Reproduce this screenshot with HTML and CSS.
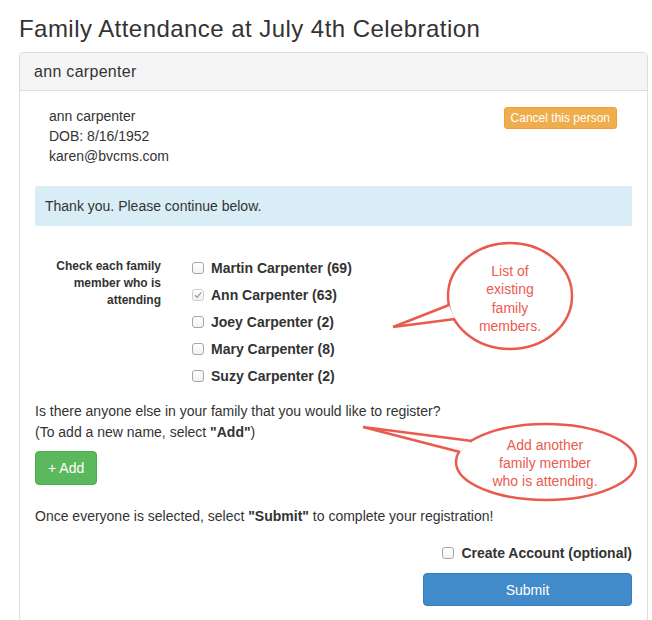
FILE: index.html
```html
<!DOCTYPE html>
<html lang="en">
<head>
    <meta charset="UTF-8">
    <meta name="viewport" content="width=device-width, initial-scale=1.0">
    <title>Family Attendance</title>
    <link rel="stylesheet" href="styles.css">
</head>
<body>
    <div class="page">
        <h1 class="title">Family Attendance at July 4th Celebration</h1>

        <div class="panel">
            <div class="panel-heading">ann carpenter</div>
            <div class="panel-body">
                <div class="person">
                    <div class="person-info">
                        <div>ann carpenter</div>
                        <div>DOB: 8/16/1952</div>
                        <div>karen@bvcms.com</div>
                    </div>
                    <button class="btn btn-warning btn-xs">Cancel this person</button>
                </div>

                <div class="alert">Thank you. Please continue below.</div>

                <div class="family">
                    <div class="family-label">Check each family member who is attending</div>
                    <div class="family-list">
                        <label class="check"><span class="box"></span>Martin Carpenter (69)</label>
                        <label class="check"><span class="box box-checked"><svg width="10" height="10" viewBox="0 0 10 10"><path d="M2 5.2 L4.2 7.4 L8.2 2.4" fill="none" stroke="#9a9a9a" stroke-width="1.3"/></svg></span>Ann Carpenter (63)</label>
                        <label class="check"><span class="box"></span>Joey Carpenter (2)</label>
                        <label class="check"><span class="box"></span>Mary Carpenter (8)</label>
                        <label class="check"><span class="box"></span>Suzy Carpenter (2)</label>
                    </div>
                </div>

                <p class="question">Is there anyone else in your family that you would like to register?<br>(To add a new name, select <b>"Add"</b>)</p>

                <button class="btn btn-success">+ Add</button>

                <p class="submit-note">Once everyone is selected, select <b>"Submit"</b> to complete your registration!</p>

                <div class="account">
                    <label class="check"><span class="box"></span>Create Account (optional)</label>
                </div>
                <div class="submit-row">
                    <button class="btn btn-primary btn-submit">Submit</button>
                </div>
            </div>
        </div>

        <svg class="callouts" width="652" height="620" viewBox="0 0 652 620">
            <ellipse cx="510" cy="296" rx="62" ry="53" fill="#fff" stroke="#ea5b4f" stroke-width="2.5"/>
            <path d="M449 305 L393 327 L455 319" fill="#fff" stroke="#ea5b4f" stroke-width="2.5" stroke-linejoin="miter"/>
            <text x="510" y="276" class="callout-text">List of</text>
            <text x="510" y="294" class="callout-text">existing</text>
            <text x="510" y="313" class="callout-text">family</text>
            <text x="510" y="331" class="callout-text">members.</text>

            <ellipse cx="546" cy="462" rx="90" ry="38" fill="#fff" stroke="#ea5b4f" stroke-width="2.5"/>
            <path d="M472 441 L363 427 L460 452" fill="#fff" stroke="#ea5b4f" stroke-width="2.5" stroke-linejoin="miter"/>
            <text x="545" y="450" class="callout-text">Add another</text>
            <text x="545" y="468" class="callout-text">family member</text>
            <text x="545" y="486" class="callout-text">who is attending.</text>
        </svg>
    </div>
</body>
</html>
```

FILE: styles.css
```css
:root {
    --text-color: #333333;
    --border-color: #dddddd;
    --heading-bg: #f5f5f5;
    --info-bg: #d9edf7;
    --warning: #f0ad4e;
    --success: #5cb85c;
    --primary: #428bca;
}

body {
    margin: 0;
    font-family: 'Liberation Sans', Arial, sans-serif;
    font-size: 14px;
    line-height: 20px;
    color: var(--text-color);
    background: #ffffff;
}

.page {
    position: relative;
    width: 652px;
    height: 620px;
    overflow: hidden;
}

.title {
    margin: 0;
    padding: 16px 0 0 19px;
    height: 36px;
    font-size: 24px;
    font-weight: 500;
    line-height: 26px;
    letter-spacing: 0.45px;
}

.panel {
    margin: 0 4px 0 19px;
    border: 1px solid var(--border-color);
    border-radius: 4px;
}

.panel-heading {
    padding: 10px 14px;
    background-color: var(--heading-bg);
    border-bottom: 1px solid var(--border-color);
    border-radius: 3px 3px 0 0;
    font-size: 16px;
    line-height: 17px;
    letter-spacing: 0.3px;
}

.panel-body {
    padding: 15px;
}

.person {
    display: flex;
    justify-content: space-between;
    align-items: flex-start;
    padding: 0 15px 0 14px;
}

.btn {
    display: inline-block;
    border: 1px solid transparent;
    border-radius: 4px;
    color: #ffffff;
    font-family: inherit;
    font-size: 14px;
    line-height: 20px;
    padding: 6px 12px;
    cursor: pointer;
}

.btn-xs {
    font-size: 12px;
    line-height: 18px;
    padding: 1px 6px;
    border-radius: 3px;
    margin-top: 1px;
}

.btn-warning {
    background-color: var(--warning);
    border-color: #eea236;
}

.btn-success {
    background-color: var(--success);
    border-color: #4cae4c;
    margin-top: 8px;
}

.btn-primary {
    background-color: var(--primary);
    border-color: #357ebd;
}

.alert {
    margin-top: 20px;
    padding: 10px;
    background-color: var(--info-bg);
    border-radius: 2px;
}

.family {
    display: grid;
    grid-template-columns: 141px 1fr;
    margin-top: 32px;
}

.family-label {
    padding-right: 15px;
    text-align: right;
    font-size: 12px;
    font-weight: bold;
    line-height: 17px;
}

.family-list {
    display: flex;
    flex-direction: column;
    gap: 7px;
    padding-left: 16px;
}

.check {
    display: flex;
    align-items: center;
    height: 20px;
    font-weight: bold;
}

.box {
    display: inline-flex;
    align-items: center;
    justify-content: center;
    box-sizing: border-box;
    width: 12px;
    height: 12px;
    margin-right: 7px;
    border: 1px solid #a6a6a6;
    border-radius: 3px;
    background: linear-gradient(#ffffff, #f2f2f2);
}

.box-checked {
    border-color: #cfcfcf;
}

.question {
    margin: 15px 0 0;
    line-height: 21px;
}

.submit-note {
    margin: 21px 0 0;
}

.account {
    display: flex;
    justify-content: flex-end;
    margin-top: 17px;
}

.submit-row {
    display: flex;
    justify-content: flex-end;
    margin-top: 10px;
}

.btn-submit {
    width: 209px;
    height: 33px;
    padding: 5px 12px;
}

.callouts {
    position: absolute;
    left: 0;
    top: 0;
    pointer-events: none;
}

.callout-text {
    font-family: 'Liberation Sans', Arial, sans-serif;
    font-size: 14px;
    fill: #ea5b4f;
    text-anchor: middle;
}
```
